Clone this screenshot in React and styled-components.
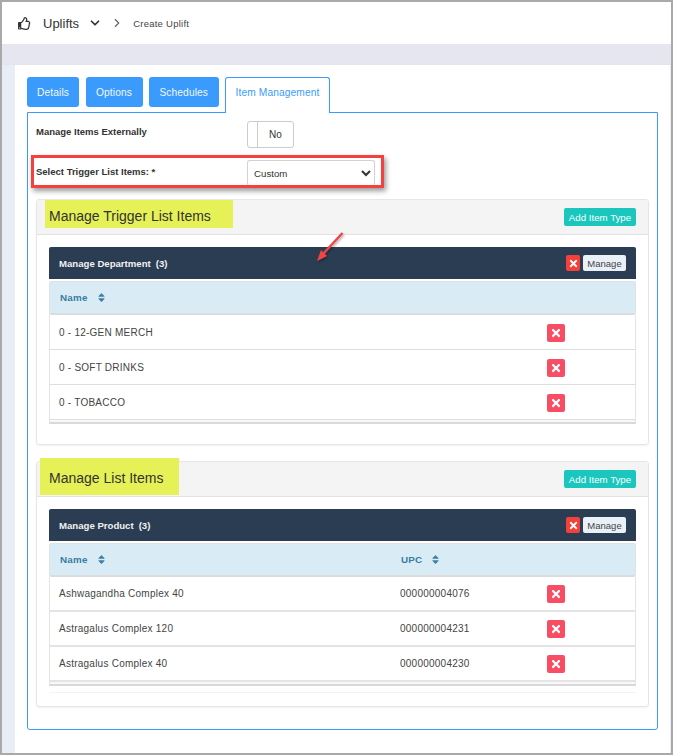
import React from "react";
import styled, { createGlobalStyle } from "styled-components";
import { FaRegThumbsUp, FaSort, FaTimes } from "react-icons/fa";
import { FiChevronDown, FiChevronRight } from "react-icons/fi";

const GlobalStyle = createGlobalStyle`
  html, body { margin: 0; padding: 0; background: #fff; }
  body { font-family: "Liberation Sans", Arial, sans-serif; color: #333; overflow: hidden; }
  * { box-sizing: border-box; }
`;

const Frame = styled.div`
  width: 673px;
  height: 755px;
  border: 2px solid #a9a9a9;
  display: flex;
  flex-direction: column;
  background: #e9edf6;
  overflow: hidden;
`;

const TopBar = styled.header`
  height: 42px;
  background: #fff;
  display: flex;
  align-items: center;
  padding-left: 16px;
  flex: none;
`;

const ModuleName = styled.span`
  font-size: 13px;
  color: #333;
  margin-left: 12px;
  margin-right: 9px;
`;

const Crumb = styled.span`
  font-size: 9.5px;
  letter-spacing: 0.25px;
  color: #444;
  margin-left: 9px;
`;

const Band = styled.div`
  height: 21px;
  flex: none;
  background: #e6e6f0;
  border-bottom: 1px solid #e3e5ee;
`;

const Sheet = styled.main`
  flex: 1;
  margin-left: 13px;
  margin-right: 1px;
  background: #fff;
  padding: 12px 12px 0 12px;
`;

const Tabs = styled.nav`
  display: flex;
  gap: 6.5px;
  height: 36px;
  align-items: flex-start;
  position: relative;
  z-index: 1;
`;

const Tab = styled.div`
  width: ${({ $width }) => $width}px;
  height: ${({ $active }) => ($active ? "36px" : "30px")};
  padding-top: ${({ $active }) => ($active ? "9px" : "0")};
  display: flex;
  justify-content: center;
  align-items: ${({ $active }) => ($active ? "flex-start" : "center")};
  font-size: 10.2px;
  letter-spacing: 0.12px;
  color: ${({ $active }) => ($active ? "#3a9cfb" : "#f2f8ff")};
  background: ${({ $active }) => ($active ? "#fff" : "#3a9bfd")};
  border: ${({ $active }) => ($active ? "1px solid #3a9bfd" : "none")};
  border-bottom: none;
  border-radius: ${({ $active }) => ($active ? "3px 3px 0 0" : "3px")};
`;

const TabPanel = styled.section`
  position: relative;
  width: 631px;
  height: 618px;
  margin-top: -1px;
  border: 1px solid #3a9bfd;
  border-radius: 0 0 3px 3px;
  padding: 8px 8px 0 8px;
`;

const FieldRow = styled.div`
  display: grid;
  grid-template-columns: 211px auto;
  align-items: start;
  height: ${({ $height }) => $height}px;
`;

const FieldLabel = styled.label`
  font-size: 9.5px;
  font-weight: 700;
  color: #333;
  padding-top: ${({ $top }) => $top}px;
`;

const Toggle = styled.div`
  width: 47px;
  height: 27px;
  border: 1px solid #ccc;
  border-radius: 3px;
  display: flex;
  align-items: center;
  font-size: 10px;
  color: #333;
`;

const ToggleHandle = styled.span`
  width: 10px;
  height: 100%;
  border-right: 1px solid #ccc;
`;

const ToggleText = styled.span`
  flex: 1;
  text-align: center;
`;

const TriggerSelect = styled.select`
  width: 128px;
  height: 26px;
  border: 1px solid #d2d2d2;
  border-bottom: none;
  border-radius: 3px;
  background: #fff;
  padding-left: 2px;
  font: 9.7px "Liberation Sans", Arial, sans-serif;
  color: #333;
`;

const RedBox = styled.div`
  position: absolute;
  left: 3px;
  top: 42px;
  width: 353px;
  height: 33px;
  border: 3px solid #f5403f;
  box-shadow: 2px 3px 5px rgba(0, 0, 0, 0.4);
  pointer-events: none;
`;

const Panel = styled.div`
  width: 613px;
  height: ${({ $height }) => $height}px;
  margin-top: ${({ $top }) => $top}px;
  border: 1px solid #e6e6e6;
  border-radius: 3px;
  box-shadow: 0 1px 2px rgba(0, 0, 0, 0.06);
`;

const PanelHeading = styled.div`
  height: 35px;
  background: #f4f4f4;
  border-bottom: 1px solid #e2e2e2;
  display: flex;
  align-items: flex-start;
  justify-content: space-between;
  padding-right: 12px;
`;

const Highlight = styled.h2`
  margin: ${({ $rise }) => -$rise}px 0 0 ${({ $left }) => $left}px;
  padding: ${({ $padTop }) => $padTop}px ${({ $padRight }) => $padRight}px 0 ${({ $padLeft }) => $padLeft}px;
  height: ${({ $height }) => $height}px;
  background: #e5f156;
  font-size: 14px;
  font-weight: 400;
  color: #333;
  white-space: nowrap;
  position: relative;
`;

const AddButton = styled.button`
  width: 72px;
  height: 18px;
  margin-top: ${({ $top }) => $top}px;
  padding: 0;
  border: none;
  border-radius: 2px;
  background: #1ac6bd;
  color: #fff;
  font: 9.7px "Liberation Sans", Arial, sans-serif;
`;

const PanelBody = styled.div`
  padding: 12px 12px 0 12px;
`;

const ManageBar = styled.div`
  height: 32px;
  background: #2b3d53;
  border-radius: 2px 2px 0 0;
  display: flex;
  align-items: center;
  justify-content: space-between;
  padding: 0 10px;
  color: #f1f1f1;
  font-size: 9.6px;
  font-weight: 700;
`;

const BarTitle = styled.span`
  display: flex;
  gap: 5px;
`;

const BarActions = styled.div`
  display: flex;
  align-items: center;
  gap: 3px;
`;

const BarDelete = styled.span`
  width: 14px;
  height: 16px;
  display: flex;
  align-items: center;
  justify-content: center;
  border-radius: 2px;
  background: #f5403a;
  color: #fff;
  font-size: 11px;
`;

const ManageButton = styled.span`
  width: 43px;
  height: 16px;
  display: flex;
  align-items: center;
  justify-content: center;
  background: #eaf0f8;
  border-radius: 2px;
  color: #444;
  font-size: 9.5px;
  font-weight: 400;
`;

const Row = styled.div`
  display: grid;
  grid-template-columns: ${({ $columns }) => $columns};
  align-items: center;
  height: ${({ $height }) => $height}px;
  border-right: 1px solid #e4e4e4;
  border-left: 1px solid #e4e4e4;
  border-bottom: ${({ $thick }) => ($thick ? "2px solid #e4e4e4" : "1px solid #dedede")};
  font-size: 10px;
  letter-spacing: 0.24px;
  color: #444;
`;

const HeadRow = styled(Row)`
  margin-top: 2px;
  background: #d9ecf6;
  border: 1px solid #dfe3e6;
  border-bottom: 2px solid #dcdcdc;
  border-radius: 2px;
  font-weight: 700;
  color: #3a7ca0;
`;

const Cell = styled.div`
  padding-left: 9px;
  display: flex;
  align-items: center;
  gap: 8px;
`;

const HeadCell = styled(Cell)`
  padding-left: 10px;
  font-size: 9.8px;
`;

const SortIcon = styled(FaSort)`
  font-size: 11px;
  color: #3f7fa3;
`;

const DeleteButton = styled.span`
  width: 18px;
  height: 18px;
  margin-top: ${({ $drop }) => ($drop ? "2px" : "0")};
  display: flex;
  align-items: center;
  justify-content: center;
  border-radius: 2px;
  background: #f94d63;
  color: #fff;
  font-size: 12px;
`;

const TableEnd = styled.div`
  height: 4px;
  background: #f8f8f8;
  border-bottom: 2px solid #d8d8de;
  border-left: 1px solid #e4e4e4;
  border-right: 1px solid #e4e4e4;
`;

const FaintLine = styled.div`
  height: 1px;
  margin-top: 6px;
  background: #f3f3f3;
`;

const Arrow = styled.svg`
  position: absolute;
  left: 284px;
  top: 114px;
  width: 36px;
  height: 40px;
  overflow: visible;
`;

const departments = ["0 - 12-GEN MERCH", "0 - SOFT DRINKS", "0 - TOBACCO"];
const products = [
  { name: "Ashwagandha Complex 40", upc: "000000004076" },
  { name: "Astragalus Complex 120", upc: "000000004231" },
  { name: "Astragalus Complex 40", upc: "000000004230" },
];

const ManageHeader = ({ title }) => (
  <ManageBar>
    <BarTitle>
      <span>{title}</span>
      <span>(3)</span>
    </BarTitle>
    <BarActions>
      <BarDelete><FaTimes /></BarDelete>
      <ManageButton>Manage</ManageButton>
    </BarActions>
  </ManageBar>
);

export default function App() {
  const deptColumns = "497px 1fr";
  const productColumns = "341px 156px 1fr";

  return (
    <Frame>
      <GlobalStyle />
      <TopBar>
        <FaRegThumbsUp size={13} color="#333" />
        <ModuleName>Uplifts</ModuleName>
        <FiChevronDown size={14} color="#333" strokeWidth={3} />
        <FiChevronRight size={14} color="#666" style={{ marginLeft: 8 }} />
        <Crumb>Create Uplift</Crumb>
      </TopBar>
      <Band />
      <Sheet>
        <Tabs>
          <Tab $width={52}>Details</Tab>
          <Tab $width={57}>Options</Tab>
          <Tab $width={69.5}>Schedules</Tab>
          <Tab $width={105} $active>Item Management</Tab>
        </Tabs>
        <TabPanel>
          <FieldRow $height={39}>
            <FieldLabel $top={5}>Manage Items Externally</FieldLabel>
            <Toggle>
              <ToggleHandle />
              <ToggleText>No</ToggleText>
            </Toggle>
          </FieldRow>
          <FieldRow $height={39}>
            <FieldLabel $top={6}>Select Trigger List Items: *</FieldLabel>
            <TriggerSelect defaultValue="Custom">
              <option>Custom</option>
            </TriggerSelect>
          </FieldRow>
          <RedBox />

          <Panel $top={0} $height={246}>
            <PanelHeading>
              <Highlight $rise={0} $left={8} $padLeft={4} $padRight={22} $padTop={8} $height={28}>
                Manage Trigger List Items
              </Highlight>
              <AddButton $top={8}>Add Item Type</AddButton>
            </PanelHeading>
            <PanelBody>
              <ManageHeader title="Manage Department" />
              <HeadRow $columns={deptColumns} $height={34}>
                <HeadCell>Name <SortIcon /></HeadCell>
                <Cell />
              </HeadRow>
              {departments.map((name) => (
                <Row key={name} $columns={deptColumns} $height={35}>
                  <Cell>{name}</Cell>
                  <DeleteButton $drop><FaTimes /></DeleteButton>
                </Row>
              ))}
              <TableEnd />
            </PanelBody>
          </Panel>

          <Panel $top={16} $height={246}>
            <PanelHeading>
              <Highlight $rise={4} $left={3} $padLeft={9} $padRight={16} $padTop={12} $height={37}>
                Manage List Items
              </Highlight>
              <AddButton $top={8}>Add Item Type</AddButton>
            </PanelHeading>
            <PanelBody>
              <ManageHeader title="Manage Product" />
              <HeadRow $columns={productColumns} $height={34}>
                <HeadCell>Name <SortIcon /></HeadCell>
                <HeadCell>UPC <SortIcon /></HeadCell>
                <Cell />
              </HeadRow>
              {products.map((product) => (
                <Row key={product.upc} $columns={productColumns} $height={35} $thick>
                  <Cell>{product.name}</Cell>
                  <Cell>{product.upc}</Cell>
                  <DeleteButton><FaTimes /></DeleteButton>
                </Row>
              ))}
              <TableEnd />
              <FaintLine />
            </PanelBody>
          </Panel>

          <Arrow viewBox="0 0 36 40">
            <defs>
              <filter id="arrowShadow" x="-30%" y="-30%" width="170%" height="170%">
                <feDropShadow dx="1" dy="1.5" stdDeviation="1" floodOpacity="0.35" />
              </filter>
            </defs>
            <g filter="url(#arrowShadow)">
              <path d="M30.5 6 L10 28" stroke="#f0443f" strokeWidth="2.4" fill="none" />
              <path d="M5 34 L9 23 L15 29 Z" fill="#f0443f" />
            </g>
          </Arrow>
        </TabPanel>
      </Sheet>
    </Frame>
  );
}
